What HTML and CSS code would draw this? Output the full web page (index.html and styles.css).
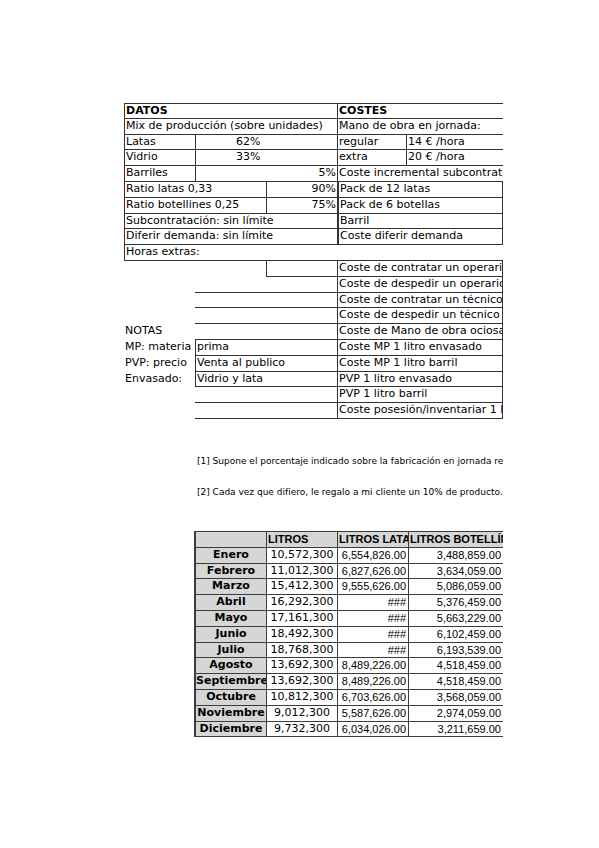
FILE: index.html
```html
<!DOCTYPE html>
<html lang="es">
<head>
<meta charset="utf-8">
<title>Datos y costes</title>
<link rel="stylesheet" href="styles.css">
</head>
<body>
<div class="page">
  <div class="sheet">
    <!-- row 1 -->
    <div class="c s3 bt bb bl b">DATOS</div>
    <div class="c s2 bt bb bl b">COSTES</div>
    <!-- row 2 -->
    <div class="c s3 bb bl">Mix de producción (sobre unidades)</div>
    <div class="c s2 bb bl">Mano de obra en jornada:</div>
    <!-- row 3 -->
    <div class="c bb bl">Latas</div>
    <div class="c s2 bb bl pct">62%</div>
    <div class="c bb bl">regular</div>
    <div class="c bb bl">14 € /hora</div>
    <!-- row 4 -->
    <div class="c bb bl">Vidrio</div>
    <div class="c s2 bb bl pct">33%</div>
    <div class="c bb bl">extra</div>
    <div class="c bb bl">20 € /hora</div>
    <!-- row 5 -->
    <div class="c bb bl">Barriles</div>
    <div class="c s2 bb bl r">5%</div>
    <div class="c s2 bb bl">Coste incremental subcontratación</div>
    <!-- row 6 -->
    <div class="c s2 bb bl">Ratio latas 0,33</div>
    <div class="c bb bl r">90%</div>
    <div class="c s2 bb bl br box">Pack de 12 latas</div>
    <!-- row 7 -->
    <div class="c s2 bb bl">Ratio botellines 0,25</div>
    <div class="c bb bl r">75%</div>
    <div class="c s2 bb bl br box">Pack de 6 botellas</div>
    <!-- row 8 -->
    <div class="c s3 bb bl">Subcontratación: sin límite</div>
    <div class="c s2 bb bl br box">Barril</div>
    <!-- row 9 -->
    <div class="c s3 bb bl">Diferir demanda: sin límite</div>
    <div class="c s2 bb bl br box">Coste diferir demanda</div>
    <!-- row 10 -->
    <div class="c s3 bb bl">Horas extras:</div>
    <div class="c s2 bb"></div>
    <!-- row 11 -->
    <div class="c s2"></div>
    <div class="c bb bl"></div>
    <div class="c s2 bb bl br">Coste de contratar un operario</div>
    <!-- row 12 -->
    <div class="c"></div>
    <div class="c s2 bb"></div>
    <div class="c s2 bb bl br">Coste de despedir un operario</div>
    <!-- row 13 -->
    <div class="c"></div>
    <div class="c s2 bb"></div>
    <div class="c s2 bb bl br">Coste de contratar un técnico</div>
    <!-- row 14 -->
    <div class="c"></div>
    <div class="c s2 bb"></div>
    <div class="c s2 bb bl br">Coste de despedir un técnico</div>
    <!-- row 15 -->
    <div class="c">NOTAS</div>
    <div class="c s2 bb"></div>
    <div class="c s2 bb bl br">Coste de Mano de obra ociosa</div>
    <!-- row 16 -->
    <div class="c">MP: materia</div>
    <div class="c s2 bb bl">prima</div>
    <div class="c s2 bb bl br">Coste MP 1 litro envasado</div>
    <!-- row 17 -->
    <div class="c">PVP: precio</div>
    <div class="c s2 bb bl">Venta al publico</div>
    <div class="c s2 bb bl br">Coste MP 1 litro barril</div>
    <!-- row 18 -->
    <div class="c">Envasado:</div>
    <div class="c s2 bb bl">Vidrio y lata</div>
    <div class="c s2 bb bl br">PVP 1 litro envasado</div>
    <!-- row 19 -->
    <div class="c"></div>
    <div class="c s2 bb"></div>
    <div class="c s2 bb bl br">PVP 1 litro barril</div>
    <!-- row 20 -->
    <div class="c"></div>
    <div class="c s2 bb"></div>
    <div class="c s2 bb bl br">Coste posesión/inventariar 1 litro</div>
  </div>

  <div class="notes">
    <p class="note">[1] Supone el porcentaje indicado sobre la fabricación en jornada regular.</p>
    <p class="note second">[2] Cada vez que difiero, le regalo a mi cliente un 10% de producto.</p>
  </div>

  <div class="data">
    <div class="h"></div><div class="h">LITROS</div><div class="h">LITROS LATA</div><div class="h">LITROS BOTELLÍN</div>
    <div class="m">Enero</div><div class="l">10,572,300</div><div class="n">6,554,826.00</div><div class="n">3,488,859.00</div>
    <div class="m">Febrero</div><div class="l">11,012,300</div><div class="n">6,827,626.00</div><div class="n">3,634,059.00</div>
    <div class="m">Marzo</div><div class="l">15,412,300</div><div class="n">9,555,626.00</div><div class="n">5,086,059.00</div>
    <div class="m">Abril</div><div class="l">16,292,300</div><div class="n">###</div><div class="n">5,376,459.00</div>
    <div class="m">Mayo</div><div class="l">17,161,300</div><div class="n">###</div><div class="n">5,663,229.00</div>
    <div class="m">Junio</div><div class="l">18,492,300</div><div class="n">###</div><div class="n">6,102,459.00</div>
    <div class="m">Julio</div><div class="l">18,768,300</div><div class="n">###</div><div class="n">6,193,539.00</div>
    <div class="m">Agosto</div><div class="l">13,692,300</div><div class="n">8,489,226.00</div><div class="n">4,518,459.00</div>
    <div class="m">Septiembre</div><div class="l">13,692,300</div><div class="n">8,489,226.00</div><div class="n">4,518,459.00</div>
    <div class="m">Octubre</div><div class="l">10,812,300</div><div class="n">6,703,626.00</div><div class="n">3,568,059.00</div>
    <div class="m">Noviembre</div><div class="l">9,012,300</div><div class="n">5,587,626.00</div><div class="n">2,974,059.00</div>
    <div class="m">Diciembre</div><div class="l">9,732,300</div><div class="n">6,034,026.00</div><div class="n">3,211,659.00</div>
  </div>
</div>
</body>
</html>
```

FILE: styles.css
```css
html, body {
  margin: 0;
  padding: 0;
  background: #ffffff;
}

.page {
  width: 379px;
  padding: 103px 0 40px 124px;
  overflow: hidden;
  color: #000;
  font-family: "DejaVu Sans", sans-serif;
}

.sheet {
  display: grid;
  grid-template-columns: 71px 71px 71px 69px 97px;
  grid-auto-rows: 15.8px;
}

.c {
  box-sizing: border-box;
  font-size: 11px;
  line-height: 14.6px;
  padding: 0 2px 0 1px;
  white-space: nowrap;
  overflow: hidden;
}

.s2 { grid-column: span 2; }
.s3 { grid-column: span 3; }

.bt { border-top: 1px solid #333; }
.bb { border-bottom: 1px solid #333; }
.bl { border-left: 1px solid #333; }
.br { border-right: 1px solid #333; }

.box { border-left-width: 2px; }

.b { font-weight: bold; }
.r { text-align: right; padding-right: 1px; }
.pct { padding-left: 40px; }

.notes {
  padding: 34px 0 0 73px;
}

.note {
  margin: 0;
  height: 16px;
  line-height: 16px;
  font-size: 9px;
  white-space: nowrap;
}

.note.second {
  margin-top: 15px;
}

.data {
  margin: 31px 0 0 71px;
  display: grid;
  grid-template-columns: 71px 71px 71px 95px;
  grid-auto-rows: 15.8px;
  border-top: 1px solid #3c3c3c;
  border-left: 2px solid #3c3c3c;
  margin-left: 70px;
}

.data > div {
  box-sizing: border-box;
  border-right: 1px solid #3c3c3c;
  border-bottom: 1px solid #3c3c3c;
  font-size: 11px;
  line-height: 14.8px;
  white-space: nowrap;
  overflow: hidden;
}

.data .h {
  background: #d6d6d6;
  font-family: "Liberation Sans", Arial, sans-serif;
  font-weight: bold;
  padding-left: 1px;
}

.data .m {
  background: #d6d6d6;
  font-weight: bold;
  text-align: center;
}

.data .l {
  background: #fff;
  text-align: center;
}

.data .n {
  background: #fff;
  font-family: "Liberation Sans", Arial, sans-serif;
  text-align: right;
  padding-right: 2px;
}
```
